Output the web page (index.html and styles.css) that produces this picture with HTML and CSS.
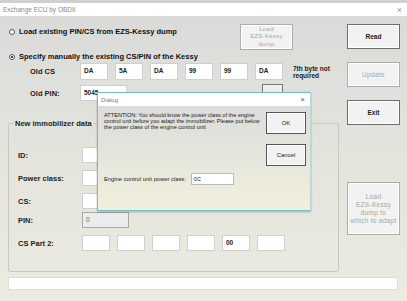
FILE: index.html
```html
<!DOCTYPE html>
<html>
<head>
<meta charset="utf-8">
<link rel="stylesheet" href="styles.css">
</head>
<body>
<div class="window">
  <div class="titlebar"><span class="title">Exchange ECU by OBDII</span><span class="close">×</span></div>
  <div class="main">
    <div class="left">
      <div class="row1">
        <label class="radio"><span class="dot"></span>Load existing PIN/CS from EZS-Kessy dump</label>
        <div class="btn disabled loadbtn">Load<br>EZS-Kessy<br>dump</div>
      </div>
      <label class="radio row2"><span class="dot on"></span>Specify manually the existing CS/PIN of the Kessy</label>
      <div class="fieldrow oldcs">
        <span class="lbl">Old CS</span>
        <div class="boxes">
          <span class="box">DA</span><span class="box">5A</span><span class="box">DA</span><span class="box">99</span><span class="box">99</span><span class="box">DA</span>
        </div>
        <span class="note">7th byte not<br>required</span>
      </div>
      <div class="fieldrow oldpin">
        <span class="lbl">Old PIN:</span>
        <span class="box wide">5045</span>
        <span class="hidbtn"></span>
      </div>
      <fieldset class="group">
        <legend>New immobilizer data</legend>
        <div class="grow"><span class="lbl">ID:</span><span class="box wide"></span></div>
        <div class="grow"><span class="lbl">Power class:</span><span class="box wide"></span></div>
        <div class="grow"><span class="lbl">CS:</span><span class="box wide"></span></div>
        <div class="grow"><span class="lbl">PIN:</span><span class="box wide grey">0</span></div>
        <div class="grow"><span class="lbl">CS Part 2:</span>
          <div class="boxes"><span class="box"></span><span class="box"></span><span class="box"></span><span class="box"></span><span class="box">00</span><span class="box"></span></div>
        </div>
      </fieldset>
    </div>
    <div class="right">
      <div class="btn">Read</div>
      <div class="btn disabled">Update</div>
      <div class="btn">Exit</div>
      <div class="btn disabled big">Load<br>EZS-Kessy<br>dump to<br>which to adapt</div>
    </div>
  </div>
  <div class="status"></div>

  <div class="dialog">
    <div class="dtitle"><span>Dialog</span><span class="dclose">×</span></div>
    <div class="dbody">
      <div class="dtop">
        <p class="msg">ATTENTION: You should know the power class of the engine control unit before you adapt the immobilizer. Please put below the power class of the engine control unit</p>
        <div class="dbtns">
          <div class="btn dbtn">OK</div>
          <div class="btn dbtn">Cancel</div>
        </div>
      </div>
      <div class="dinput"><span>Engine control unit power class:</span><span class="din">0C</span></div>
    </div>
  </div>
</div>
</body>
</html>
```
FILE: styles.css
```css
* { box-sizing: border-box; }
html, body { margin: 0; padding: 0; }
body {
  width: 407px; height: 301px; overflow: hidden;
  font-family: "Liberation Sans", Arial, sans-serif;
  background: #d0d0d0;
}
.window {
  position: relative;
  margin-top: 3px;
  height: 298px;
  background: linear-gradient(#d9d9d9 0%, #e2e2dc 40%, #ecebe0 100%);
}
.titlebar {
  height: 13px; background: #fff;
  display: flex; justify-content: space-between; align-items: center;
  padding: 0 5px 0 3px;
  font-size: 6.5px; color: #8a8a8a;
}
.close { font-size: 9px; color: #999; }
.main { display: flex; }
.left { width: 340px; padding-left: 8px; }
.right {
  width: 67px; padding-left: 7px; padding-top: 8px;
  display: flex; flex-direction: column;
}
.btn {
  width: 53px; height: 25px;
  background: #f2f2f2; border: 1px solid #6e6e6e;
  box-shadow: inset 0 0 0 1px #fff;
  display: flex; align-items: center; justify-content: center; text-align: center;
  font-weight: bold; font-size: 6.5px; color: #222; line-height: 8px;
}
.btn.disabled { border-color: #acacac; color: #a4a4a4; font-weight: normal; letter-spacing: 0.3px; }
.right .btn { margin-bottom: 13px; }
.right .btn:nth-child(3) { margin-bottom: 57px; }
.right .btn.big { height: 53px; font-weight: normal; font-size: 6.5px; }
.row1 { display: flex; align-items: flex-start; height: 36px; padding-top: 8px; }
.loadbtn { margin-left: auto; margin-right: 47px; height: 26px; font-size: 6px; line-height: 7.5px; }
.radio {
  display: flex; align-items: center; gap: 4px;
  font-weight: bold; font-size: 7.5px; color: #111;
  margin-top: 3px; padding-left: 1px; height: 9px;
}
.row2 { margin-top: 0; height: 9px; }
.dot {
  width: 6px; height: 6px; border-radius: 50%;
  background: #fff; border: 1px solid #555; position: relative;
}
.dot.on::after {
  content: ""; position: absolute; left: 1px; top: 1px; width: 2px; height: 2px; border-radius: 50%; background: #111;
}
.fieldrow { display: flex; align-items: center; }
.lbl { font-weight: bold; font-size: 7.5px; color: #222; width: 50px; }
.oldcs { margin-top: 2px; height: 17px; padding-left: 22px; }
.oldpin { margin-top: 5px; height: 16px; padding-left: 22px; position: relative; }
.boxes { display: flex; gap: 7px; }
.box {
  width: 28px; height: 16px; background: #fff;
  border: 1px solid #cfcfcf; font-size: 6.5px; font-weight: bold; color: #222;
  padding: 3px 0 0 3px; line-height: 7px;
}
.oldcs .box { height: 17px; }
.box.wide { width: 47px; }
.box.grey { background: #ececec; border-color: #a8a8a8; font-weight: normal; color: #666; }
.note { font-size: 6.5px; font-weight: bold; color: #222; line-height: 7px; margin-left: 10px; }
.hidbtn { width: 21px; height: 10px; border: 1px solid #777; background: #eee; margin-left: 135px; margin-top: -8px; }
.group {
  margin: 18px 0 0 0; width: 331px; height: 153px;
  border: 1px solid #c8c8c0; border-radius: 2px;
  padding: 19px 0 0 9px;
}
.group legend { font-weight: bold; font-size: 7.5px; color: #222; padding: 0 2px; margin-left: -5px; }
.grow { display: flex; align-items: center; height: 16px; margin-bottom: 7px; }
.grow .lbl { width: 64px; }
.grow:nth-child(4) { margin-bottom: 3px; }
.grow:nth-child(5) { margin-bottom: 7px; }
.status {
  margin: 5px 0 0 8px; width: 390px; height: 13px;
  background: #fff; border: 1px solid #ddd;
}
.dialog {
  position: absolute; left: 97px; top: 89px; width: 214px; height: 119px;
  border: 1px solid #72c2c4; border-right-color: #b8d8d8;
  box-shadow: 0 1px 2px rgba(0,0,0,0.25);
  display: flex; flex-direction: column;
}
.dtitle {
  height: 13px; background: #fff;
  display: flex; justify-content: space-between; align-items: center;
  padding: 0 5px 0 3px; font-size: 6px; color: #777;
}
.dclose { font-size: 8px; color: #555; }
.dbody {
  flex: 1; background: linear-gradient(#dcdcdc 0%, #e6e6dc 50%, #f1f0dc 100%);
  padding: 6px 4px 0 6px;
}
.dtop { display: flex; justify-content: space-between; }
.msg { margin: 0; width: 158px; font-size: 5.6px; line-height: 6px; color: #222; }
.dbtns { display: flex; flex-direction: column; gap: 10px; }
.dbtn { width: 40px; height: 22px; font-weight: normal; font-size: 6px; border-color: #555; }
.dinput { display: flex; align-items: center; gap: 5px; font-size: 5.8px; color: #222; margin-top: 7px; }
.din { width: 43px; height: 12px; background: #fff; border: 1px solid #bbb; font-size: 5.5px; padding: 2px 2px; }
```
